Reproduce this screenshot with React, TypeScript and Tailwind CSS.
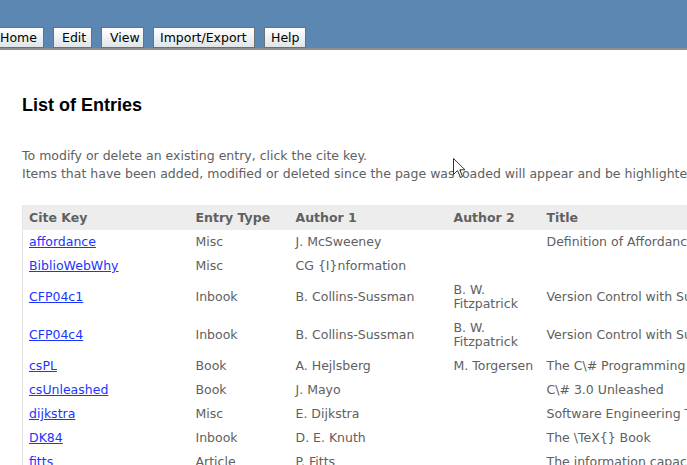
import React from "react";

const rows: [string, string, string, string, string][] = [
  ["affordance", "Misc", "J. McSweeney", "", "Definition of Affordance"],
  ["BiblioWebWhy", "Misc", "CG {I}nformation", "", ""],
  ["CFP04c1", "Inbook", "B. Collins-Sussman", "B. W. Fitzpatrick", "Version Control with Subversion"],
  ["CFP04c4", "Inbook", "B. Collins-Sussman", "B. W. Fitzpatrick", "Version Control with Subversion"],
  ["csPL", "Book", "A. Hejlsberg", "M. Torgersen", "The C\\# Programming Language"],
  ["csUnleashed", "Book", "J. Mayo", "", "C\\# 3.0 Unleashed"],
  ["dijkstra", "Misc", "E. Dijkstra", "", "Software Engineering Techniques"],
  ["DK84", "Inbook", "D. E. Knuth", "", "The \\TeX{} Book"],
  ["fitts", "Article", "P. Fitts", "", "The information capacity of the human motor system"],
];

const font = { fontFamily: '"DejaVu Sans", Verdana, sans-serif' };

function Btn({ label, cls = "" }: { label: string; cls?: string }) {
  return (
    <div
      className={`h-[21px] border border-[#707070] bg-gradient-to-b from-white to-[#dfe5e8] px-[8px] text-[12.5px] leading-[19px] text-black ${cls}`}
    >
      {label}
    </div>
  );
}

export default function App() {
  return (
    <div className="relative h-[465px] w-[687px] overflow-hidden bg-white" style={font}>
      <div className="h-[50px] border-b-2 border-[#8f8f8f] bg-[#5c87b3]">
        <div className="flex gap-[9px] pt-[27px]">
          <Btn label="Home" cls="-ml-[9px] pl-[8px] w-[53px]" />
          <Btn label="Edit" cls="w-[39px]" />
          <Btn label="View" cls="w-[43px]" />
          <Btn label="Import/Export" cls="w-[102px] !px-[6px]" />
          <Btn label="Help" cls="w-[42px] !px-[6px]" />
        </div>
      </div>
      <div className="pl-[22px]">
        <h1
          className="mt-[44px] text-[18px] font-bold leading-[22px] text-black"
          style={{ fontFamily: '"Liberation Sans", Arial, sans-serif' }}
        >
          List of Entries
        </h1>
        <p className="mt-[31px] whitespace-nowrap text-[12.5px] leading-[18px] text-[#606060]">
          To modify or delete an existing entry, click the cite key.
          <br />
          Items that have been added, modified or deleted since the page was loaded will appear and be highlighted.
        </p>
        <table className="mt-[22px] w-[900px] table-fixed border-collapse border-l border-[#e4e4e4] text-[12.5px] text-[#606060]">
          <colgroup>
            <col className="w-[167px]" />
            <col className="w-[100px]" />
            <col className="w-[158px]" />
            <col className="w-[93px]" />
            <col />
          </colgroup>
          <thead>
            <tr className="h-[25px] bg-[#ededed]">
              {["Cite Key", "Entry Type", "Author 1", "Author 2", "Title"].map((h) => (
                <th key={h} className="px-[6px] text-left font-bold leading-[14px] text-[#606060]">
                  {h}
                </th>
              ))}
            </tr>
          </thead>
          <tbody>
            {rows.map((r) => (
              <tr key={r[0]}>
                <td className="px-[6px] py-[5px] align-middle leading-[14px]">
                  <a href="#" className="text-[#1a35ff] underline">
                    {r[0]}
                  </a>
                </td>
                <td className="px-[6px] py-[5px] leading-[14px]">{r[1]}</td>
                <td className="whitespace-nowrap px-[6px] py-[5px] leading-[14px]">{r[2]}</td>
                <td className="px-[6px] py-[5px] leading-[14px]">{r[3]}</td>
                <td className="whitespace-nowrap px-[6px] py-[5px] leading-[14px]">{r[4]}</td>
              </tr>
            ))}
          </tbody>
        </table>
      </div>
      <svg className="absolute left-[453px] top-[158px]" width="13" height="21" viewBox="0 0 13 21">
        <path d="M0.5 0.5 L0.5 16.5 L4.5 12.5 L7.5 19.5 L9.5 18.5 L6.8 11.8 L12 11.8 Z" fill="white" stroke="#333" strokeWidth="1" />
      </svg>
    </div>
  );
}
